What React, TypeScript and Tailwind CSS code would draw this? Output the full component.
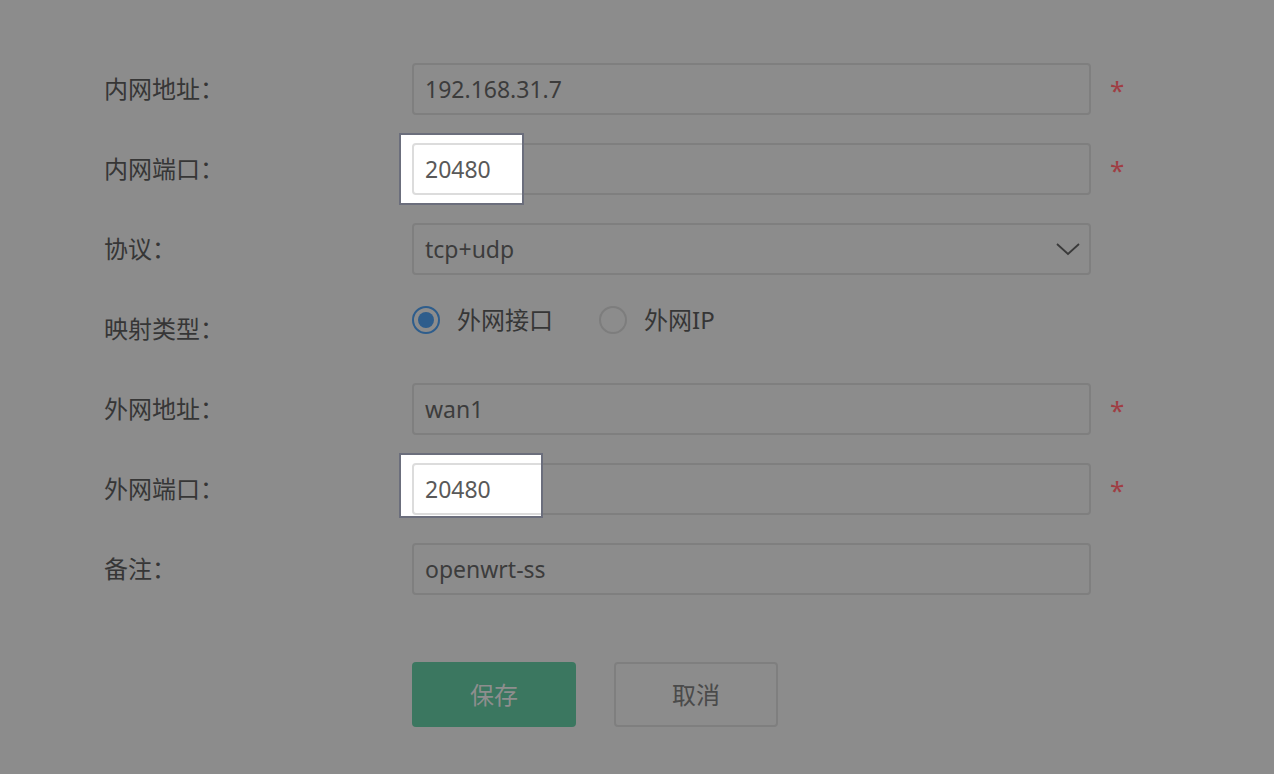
import { ReactNode } from "react";

const font = "font-['Noto_Sans','Noto_Sans_CJK_SC',sans-serif]";

type Spot = { w: number; h: number };

const Input = ({
  value,
  spot,
  select,
}: {
  value: string;
  spot?: Spot;
  select?: boolean;
}) => {
  return (
    <div className="relative">
      <div className="w-[679px] h-[52px] border-2 border-[#7f7f7f] rounded-[4px] flex items-center justify-between pl-[11px] pr-[8px]">
        <span className="text-[23px] text-[#3c3c3c]">{value}</span>
        {select && (
          <svg width="26" height="16" viewBox="0 0 26 16" className="text-[#3a3a3a]">
            <polyline
              points="2,3 13,13 24,3"
              fill="none"
              stroke="currentColor"
              strokeWidth="1.8"
            />
          </svg>
        )}
      </div>
      {spot && (
        // highlighted area over the dimming overlay
        <div
          className={`absolute left-[-13px] top-[-10px] bg-white border-2 border-[#6b6e7c] overflow-hidden ${
            spot.w === 125 ? "w-[125px] h-[72px]" : "w-[144px] h-[65px]"
          }`}
        >
          <div className="absolute left-[11px] top-[8px] w-[679px] h-[52px] border-2 border-[#dcdcdc] rounded-[4px] flex items-center pl-[11px]">
            <span className="text-[23px] text-[#595959]">{value}</span>
          </div>
        </div>
      )}
    </div>
  );
};

const Row = ({
  label,
  required,
  children,
}: {
  label: string;
  required?: boolean;
  children: ReactNode;
}) => (
  <div className="flex items-center h-[52px]">
    <div className="w-[308px] text-[24px] text-[#363636]">{label}：</div>
    {children}
    {required && (
      <span className="ml-[19px] text-[26px] leading-none text-[#a03d43] pt-[2px]">*</span>
    )}
  </div>
);

const Radio = ({ checked, label }: { checked?: boolean; label: string }) => (
  <div className="flex items-center gap-[17px]">
    <div
      className={`w-[28px] h-[28px] rounded-full border-2 flex items-center justify-center ${
        checked ? "border-[#2e5d8c]" : "border-[#7d7d7d]"
      }`}
    >
      {checked && <div className="w-[16px] h-[16px] rounded-full bg-[#2e5d8c]" />}
    </div>
    <span className="text-[24px] text-[#363636]">{label}</span>
  </div>
);

export default function App() {
  return (
    <div className={`${font} w-[1274px] h-[774px] bg-[#8c8c8c] pl-[104px] pt-[63px]`}>
      <div className="flex flex-col gap-[28px]">
        <Row label="内网地址" required>
          <Input value="192.168.31.7" />
        </Row>
        <Row label="内网端口" required>
          <Input value="20480" spot={{ w: 125, h: 72 }} />
        </Row>
        <Row label="协议">
          <Input value="tcp+udp" select />
        </Row>
        <Row label="映射类型">
          <div className="self-start mt-[-1px] flex items-center gap-[46px]">
            <Radio checked label="外网接口" />
            <Radio label="外网IP" />
          </div>
        </Row>
        <Row label="外网地址" required>
          <Input value="wan1" />
        </Row>
        <Row label="外网端口" required>
          <Input value="20480" spot={{ w: 144, h: 65 }} />
        </Row>
        <Row label="备注">
          <Input value="openwrt-ss" />
        </Row>
      </div>
      <div className="flex gap-[38px] ml-[308px] mt-[67px]">
        <button className="w-[164px] h-[65px] rounded-[4px] bg-[#3b7760] text-[24px] text-[#8e8e8e]">
          保存
        </button>
        <button className="w-[164px] h-[65px] rounded-[4px] border-2 border-[#7f7f7f] text-[24px] text-[#4a4a4a]">
          取消
        </button>
      </div>
    </div>
  );
}
